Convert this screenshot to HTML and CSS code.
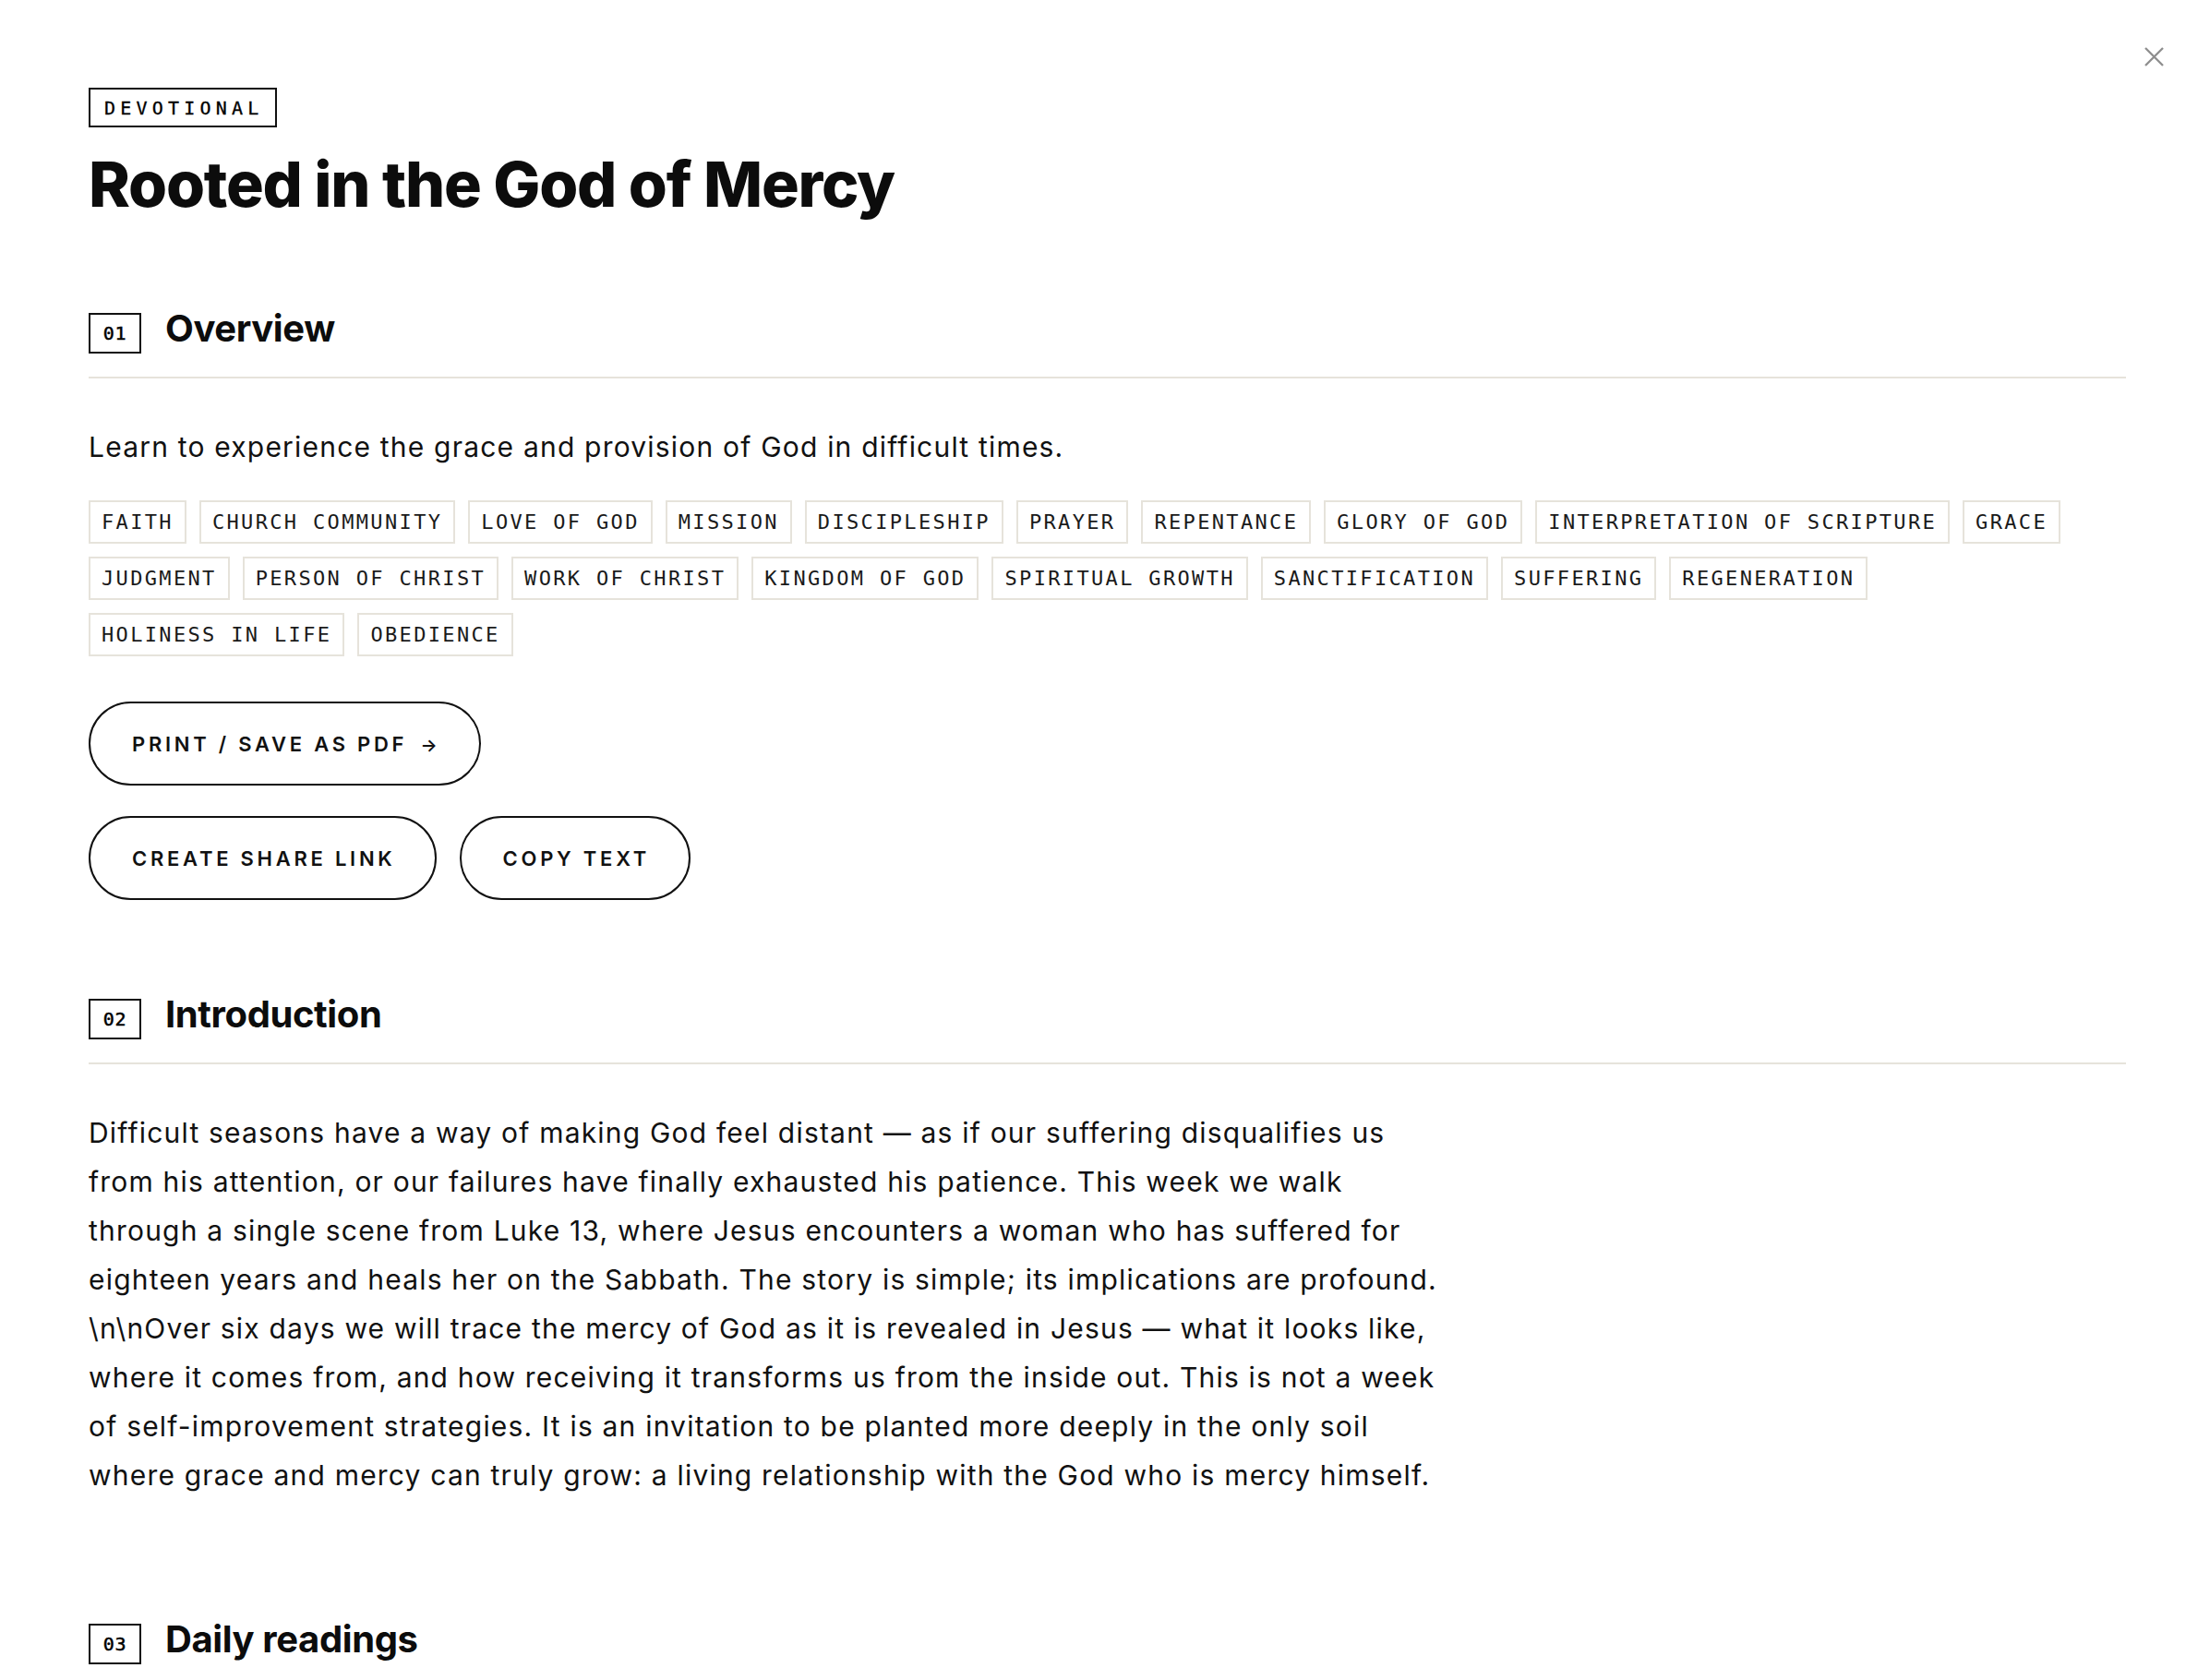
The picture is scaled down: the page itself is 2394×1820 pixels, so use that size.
FILE: index.html
```html
<!DOCTYPE html>
<html lang="en">
<head>
<meta charset="utf-8">
<title>Rooted in the God of Mercy</title>
<link rel="stylesheet" href="styles.css">
</head>
<body>
<div class="modal">
  <button class="close" aria-label="Close">
    <svg viewBox="0 0 21 21" width="21" height="21"><path d="M1 1L20 20M20 1L1 20" stroke="#8e8e8e" stroke-width="2.3" fill="none"/></svg>
  </button>

  <header class="head">
    <span class="badge">DEVOTIONAL</span>
    <h1 class="title">Rooted in the God of Mercy</h1>
  </header>

  <section class="section">
    <div class="sec-head"><span class="num">01</span><h2 class="sec-title">Overview</h2></div>
    <p class="summary">Learn to experience the grace and provision of God in difficult times.</p>
    <ul class="tags">
      <li class="tag">FAITH</li>
      <li class="tag">CHURCH COMMUNITY</li>
      <li class="tag">LOVE OF GOD</li>
      <li class="tag">MISSION</li>
      <li class="tag">DISCIPLESHIP</li>
      <li class="tag">PRAYER</li>
      <li class="tag">REPENTANCE</li>
      <li class="tag">GLORY OF GOD</li>
      <li class="tag">INTERPRETATION OF SCRIPTURE</li>
      <li class="tag">GRACE</li>
      <li class="tag">JUDGMENT</li>
      <li class="tag">PERSON OF CHRIST</li>
      <li class="tag">WORK OF CHRIST</li>
      <li class="tag">KINGDOM OF GOD</li>
      <li class="tag">SPIRITUAL GROWTH</li>
      <li class="tag">SANCTIFICATION</li>
      <li class="tag">SUFFERING</li>
      <li class="tag">REGENERATION</li>
      <li class="tag">HOLINESS IN LIFE</li>
      <li class="tag">OBEDIENCE</li>
    </ul>
    <div class="actions">
      <div class="action-row"><button class="pill">PRINT / SAVE AS PDF <span class="arrow">→</span></button></div>
      <div class="action-row"><button class="pill">CREATE SHARE LINK</button><button class="pill">COPY TEXT</button></div>
    </div>
  </section>

  <section class="section">
    <div class="sec-head"><span class="num">02</span><h2 class="sec-title">Introduction</h2></div>
    <p class="intro">Difficult seasons have a way of making God feel distant — as if our suffering disqualifies us<br>
from his attention, or our failures have finally exhausted his patience. This week we walk<br>
through a single scene from Luke 13, where Jesus encounters a woman who has suffered for<br>
eighteen years and heals her on the Sabbath. The story is simple; its implications are profound.<br>
\n\nOver six days we will trace the mercy of God as it is revealed in Jesus — what it looks like,<br>
where it comes from, and how receiving it transforms us from the inside out. This is not a week<br>
of self-improvement strategies. It is an invitation to be planted more deeply in the only soil<br>
where grace and mercy can truly grow: a living relationship with the God who is mercy himself.</p>
  </section>

  <section class="section section-readings">
    <div class="sec-head"><span class="num">03</span><h2 class="sec-title">Daily readings</h2></div>
  </section>
</div>
</body>
</html>
```

FILE: styles.css
```css
html, body {
  margin: 0;
  background: #ffffff;
}

body {
  font-family: Inter, "Liberation Sans", sans-serif;
  color: #111111;
}

.modal {
  position: relative;
  padding: 95px 91px 0 96px;
}

.close {
  position: absolute;
  top: 51px;
  right: 50px;
  width: 21px;
  height: 21px;
  padding: 0;
  border: 0;
  background: none;
  display: block;
}

.close svg {
  display: block;
}

.head {
  display: flex;
  flex-direction: column;
  align-items: flex-start;
}

.badge {
  display: inline-flex;
  align-items: center;
  height: 43px;
  box-sizing: border-box;
  border: 2px solid #111111;
  padding: 0 13px 0 15px;
  font-family: "DejaVu Sans Mono", "Liberation Mono", monospace;
  font-size: 20px;
  line-height: 1;
  letter-spacing: 0.26em;
  color: #000000;
  -webkit-text-stroke: 0.3px #000000;
}

.title {
  margin: 25px 0 0;
  font-size: 68px;
  line-height: 72px;
  font-weight: 800;
  letter-spacing: -0.018em;
  color: #0c0c0c;
}

.section {
  margin-top: 104px;
}

.section + .section {
  margin-top: 107px;
}

.section + .section-readings {
  margin-top: 134px;
}

.sec-head {
  display: flex;
  align-items: flex-start;
  gap: 26px;
  padding-bottom: 25px;
  border-bottom: 2px solid #e6e3db;
}

.num {
  display: flex;
  align-items: center;
  justify-content: center;
  width: 57px;
  height: 44px;
  box-sizing: border-box;
  border: 2px solid #111111;
  font-family: "DejaVu Sans Mono", "Liberation Mono", monospace;
  font-size: 20px;
  letter-spacing: 0.04em;
  color: #000000;
  -webkit-text-stroke: 0.5px #000000;
}

.sec-title {
  margin: -3px 0 0;
  font-size: 40px;
  line-height: 1;
  font-weight: 700;
  letter-spacing: -0.01em;
  color: #0c0c0c;
}

.summary {
  margin: 48px 0 0;
  font-size: 30px;
  line-height: 53px;
  letter-spacing: 0.04em;
}

.tags {
  list-style: none;
  margin: 31px 0 0;
  padding: 0;
  display: flex;
  flex-wrap: wrap;
  gap: 14px;
}

.tag {
  display: flex;
  align-items: center;
  height: 47px;
  box-sizing: border-box;
  border: 2px solid #e6e3db;
  padding: 0 12px;
  font-family: "DejaVu Sans Mono", "Liberation Mono", monospace;
  font-size: 22px;
  letter-spacing: 2.34px;
  color: #1a1a1a;
}

.actions {
  margin-top: 49px;
  display: flex;
  flex-direction: column;
  gap: 33px;
}

.action-row {
  display: flex;
  gap: 25px;
}

.pill {
  height: 91px;
  box-sizing: border-box;
  border: 2px solid #111111;
  border-radius: 999px;
  background: #ffffff;
  padding: 0 42px 0 45px;
  font-family: Inter, "Liberation Sans", sans-serif;
  font-size: 22px;
  font-weight: 600;
  letter-spacing: 0.17em;
  color: #111111;
}

.arrow {
  display: inline-block;
  margin-left: 5px;
  font-size: 19px;
}

.intro {
  margin: 48px 0 0;
  max-width: 1620px;
  font-size: 30px;
  line-height: 53px;
  letter-spacing: 0.04em;
}
```
